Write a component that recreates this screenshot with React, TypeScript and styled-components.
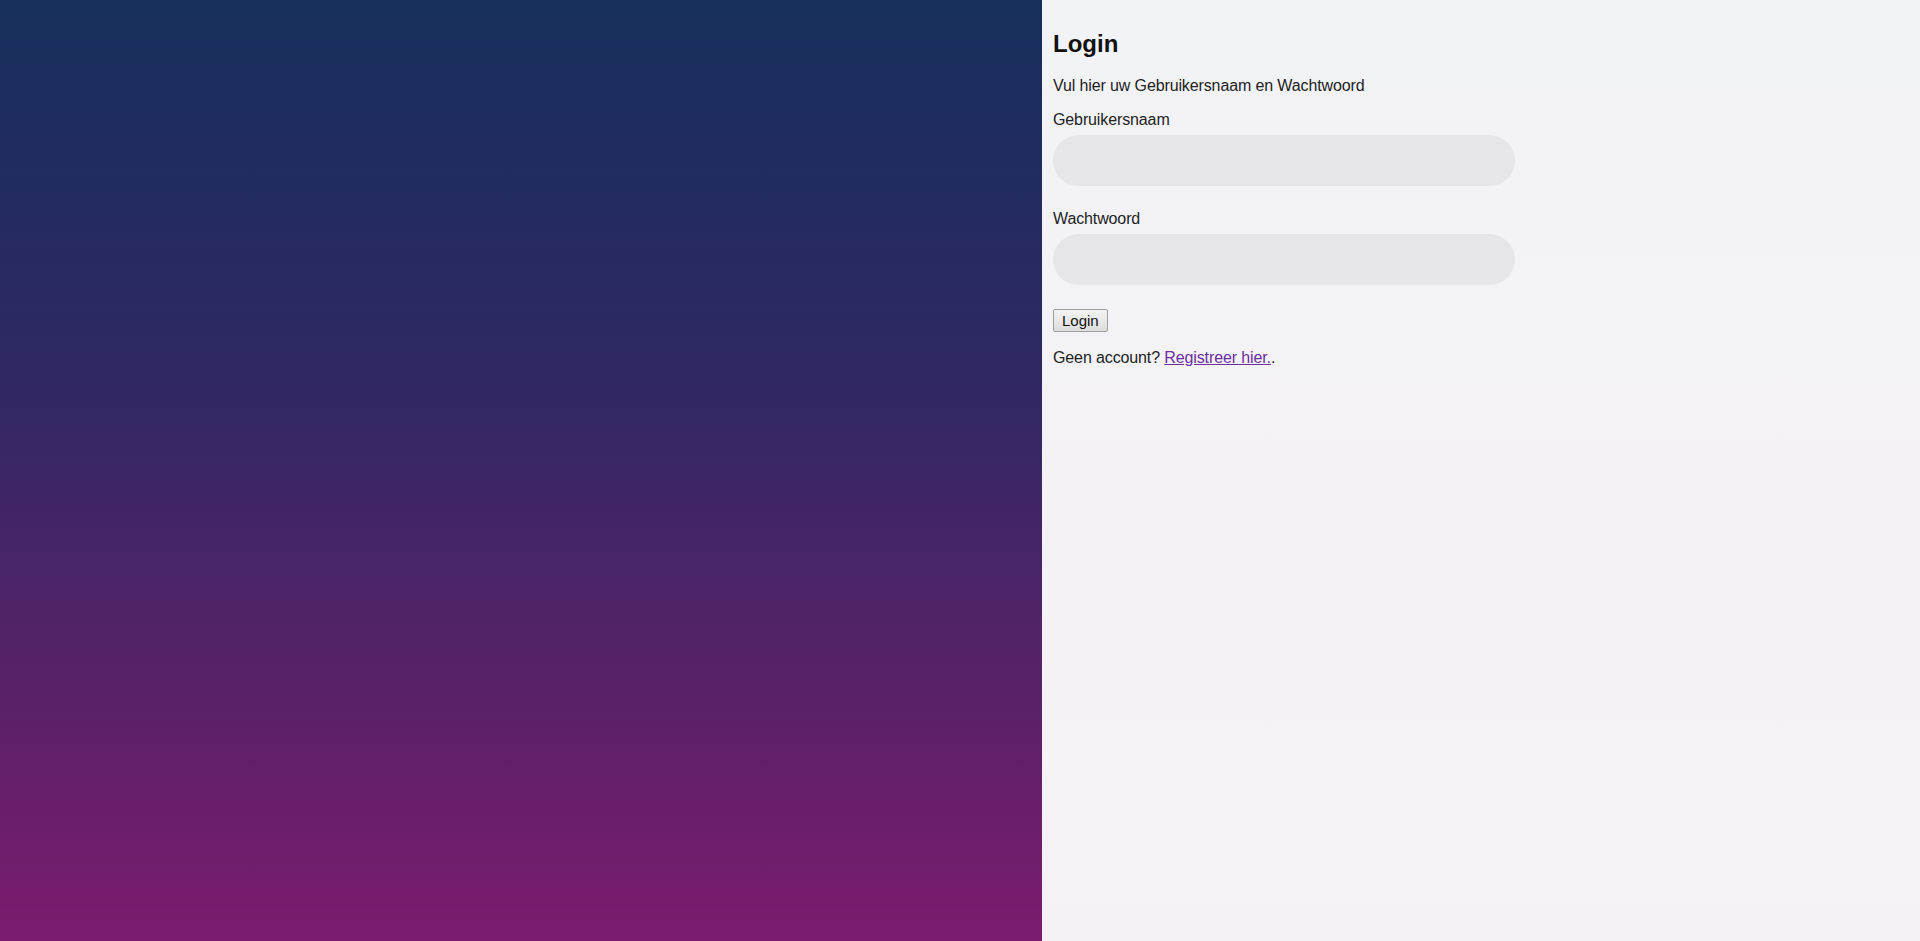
import React from "react";
import styled, { createGlobalStyle } from "styled-components";

const Global = createGlobalStyle`
  html, body { margin: 0; padding: 0; }
  body { font-family: "Liberation Sans", Arial, sans-serif; color: #222; }
`;

const Page = styled.div`
  display: flex;
  width: 100%;
  height: 941px;
`;

const Aside = styled.div`
  flex: 0 0 1042px;
  height: 100%;
  background: linear-gradient(to bottom, #162f5b 0%, #2f2863 40%, #5b2168 75%, #7b1b6f 100%);
`;

const Main = styled.main`
  flex: 1;
  height: 100%;
  box-sizing: border-box;
  padding: 30px 11px 0;
  background: linear-gradient(to bottom, #f2f3f7 0%, #f6f1f7 100%);
  display: flex;
  flex-direction: column;
  align-items: flex-start;
`;

const Title = styled.h2`
  margin: 0;
  font-size: 24px;
  line-height: 28px;
  font-weight: 700;
  color: #111;
`;

const Text = styled.p<{ $top: number }>`
  margin: ${(p) => p.$top}px 0 0;
  font-size: 16px;
  line-height: 18px;
  letter-spacing: -0.12px;
  color: #222;
`;

const Label = styled.label<{ $top: number }>`
  display: block;
  margin-top: ${(p) => p.$top}px;
  font-size: 16px;
  line-height: 18px;
  letter-spacing: -0.12px;
  color: #222;
`;

const Input = styled.input`
  display: block;
  margin-top: 6px;
  width: 462px;
  height: 51px;
  box-sizing: border-box;
  border: none;
  border-radius: 26px;
  background: #e6e6e8;
  padding: 0 20px;
  font-size: 16px;
  font-family: inherit;
  outline: none;
`;

const Button = styled.button`
  margin-top: 24px;
  height: 23px;
  box-sizing: border-box;
  padding: 0 8px;
  font-family: "Liberation Sans", Arial, sans-serif;
  font-size: 15px;
  line-height: 19px;
  color: #111;
  background: linear-gradient(to bottom, #f3f3f3, #dddddd);
  border: 1px solid #9e9e9e;
  border-radius: 2px;
`;

const Link = styled.a`
  color: #6a2fa0;
  text-decoration: underline;
`;

export default function App() {
  return (
    <>
      <Global />
      <Page>
        <Aside />
        <Main>
          <Title>Login</Title>
          <Text $top={19}>Vul hier uw Gebruikersnaam en Wachtwoord</Text>
          <Label $top={16}>Gebruikersnaam</Label>
          <Input type="text" />
          <Label $top={24}>Wachtwoord</Label>
          <Input type="password" />
          <Button>Login</Button>
          <Text $top={17}>
            Geen account? <Link href="#">Registreer hier.</Link>.
          </Text>
        </Main>
      </Page>
    </>
  );
}
